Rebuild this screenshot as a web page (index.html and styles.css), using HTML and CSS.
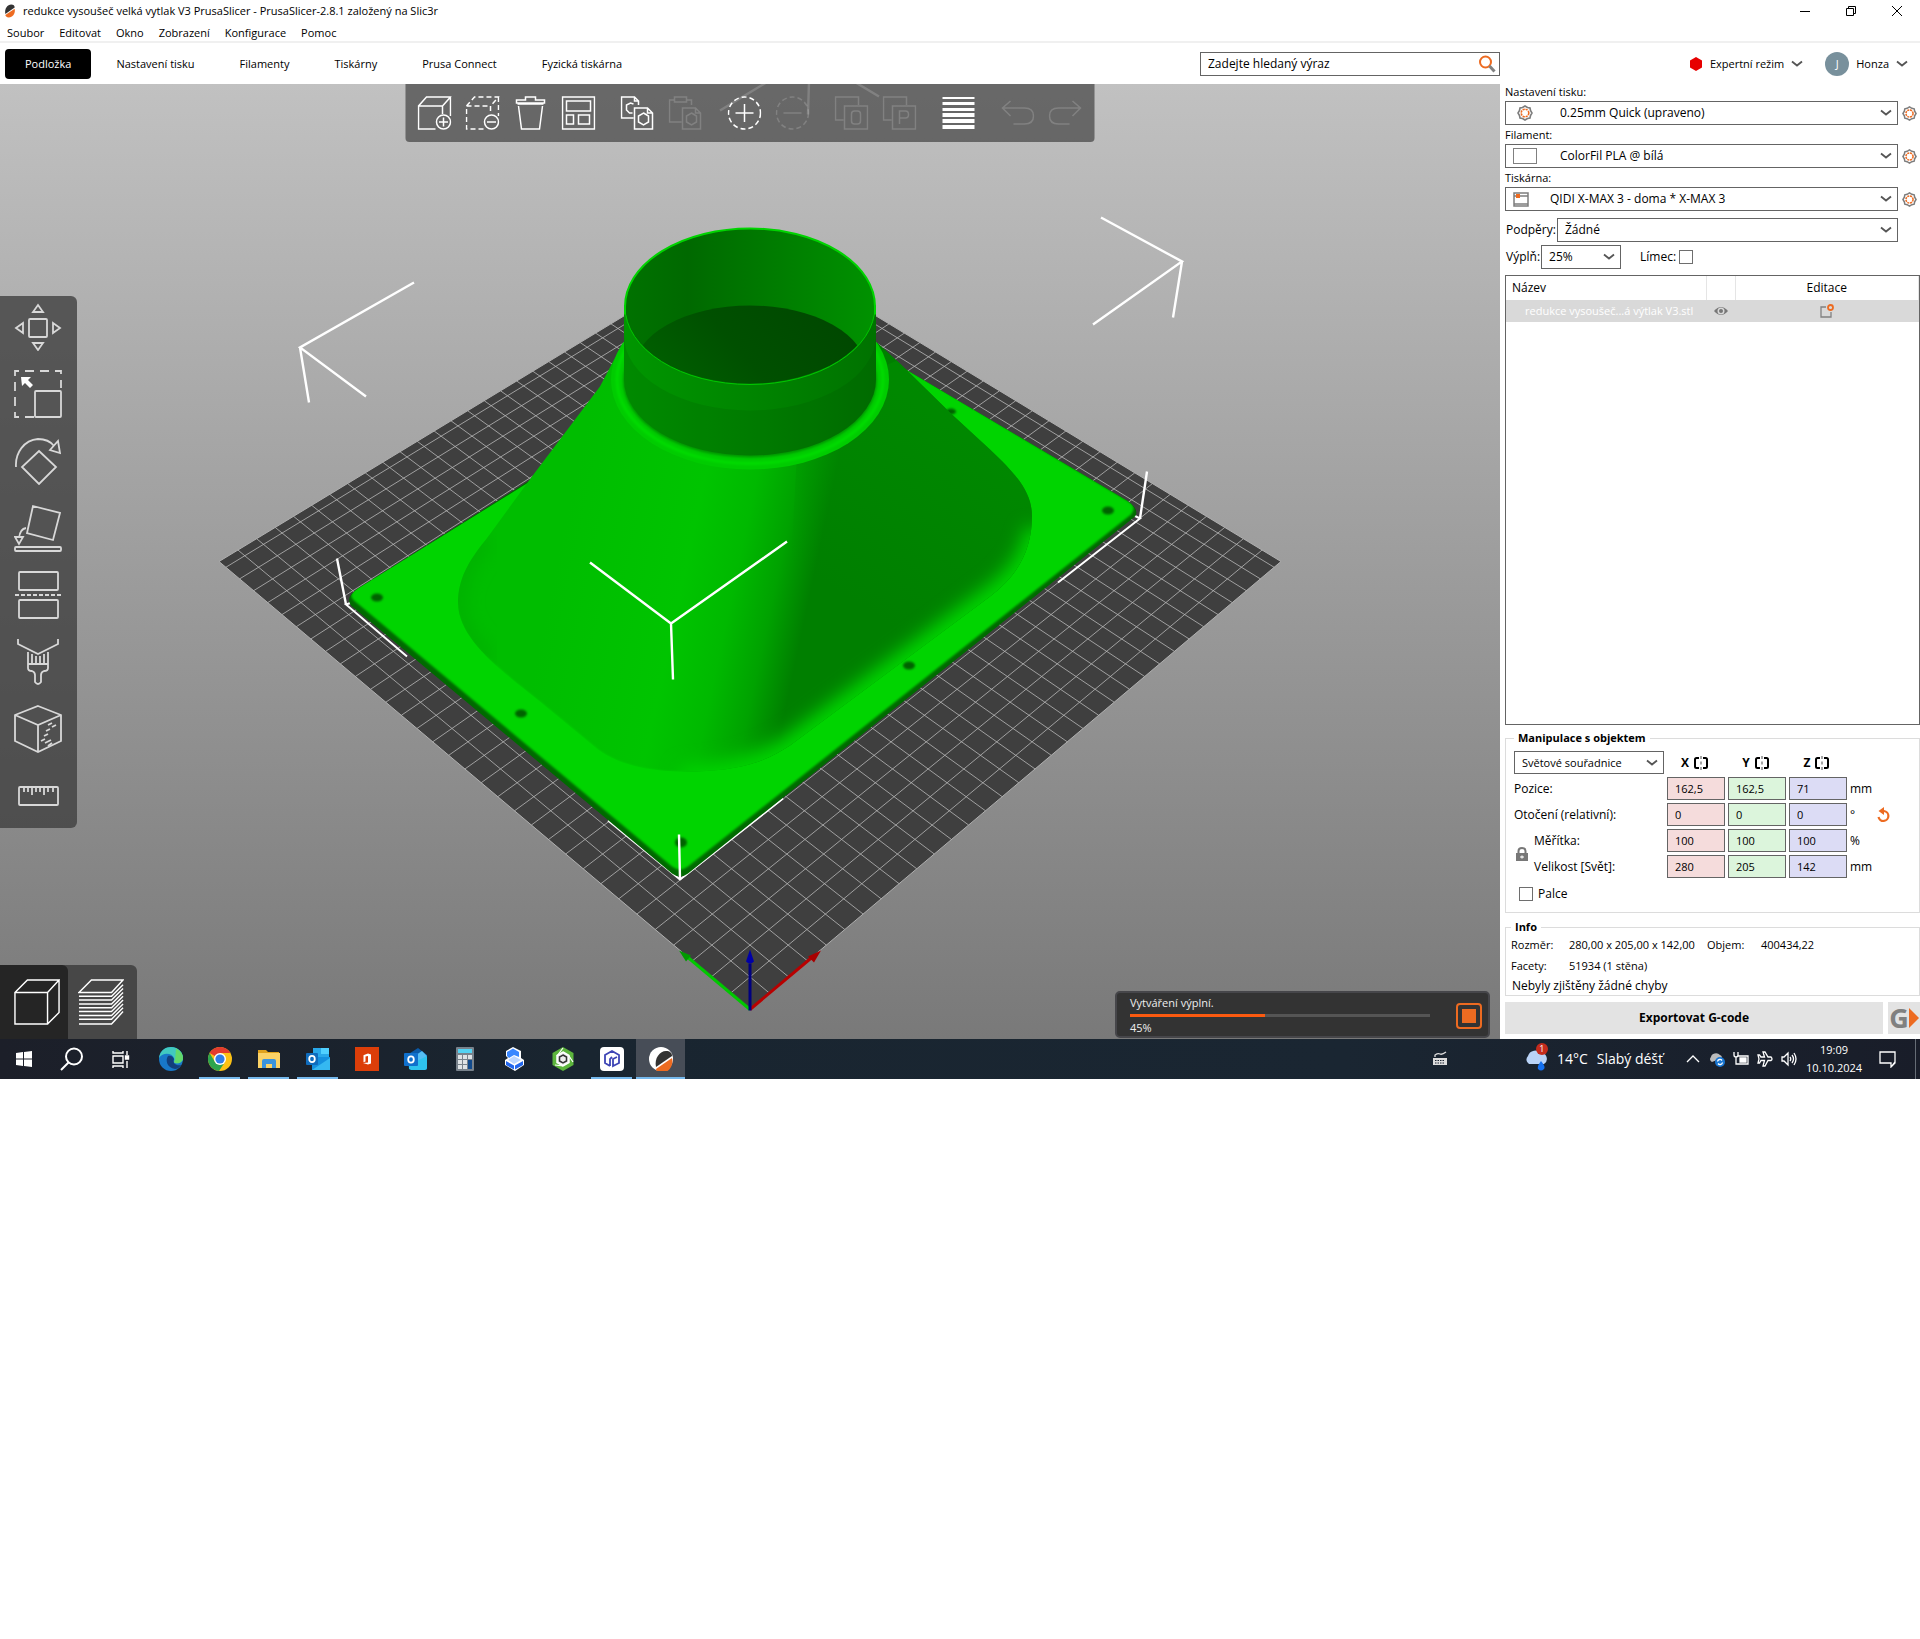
FILE: index.html
```html
<!DOCTYPE html>
<html lang="cs">
<head>
<meta charset="utf-8">
<title>redukce vysoušeč velká vytlak V3 PrusaSlicer</title>
<link rel="stylesheet" href="styles.css">
<script src="scene.js" defer></script>
</head>
<body>
<svg class="sprite" aria-hidden="true">
  <symbol id="chev" viewBox="0 0 12 8"><path d="M1 1.500L6 5.500L11 1.500" fill="none" stroke="#555" stroke-width="1.800"/></symbol>
  <symbol id="gear" viewBox="0 0 16 16"><g fill="none" stroke="#7d7d7d" stroke-width="1.600"><path d="M8 1L10.500 2.500L13 3L13.500 5.500L15 8L13.500 10.500L13 13L10.500 13.500L8 15L5.500 13.500L3 13L2.500 10.500L1 8L2.500 5.500L3 3L5.500 2.500Z"/></g><circle cx="8" cy="8" r="3.800" fill="none" stroke="#ed6b21" stroke-width="1.600" stroke-dasharray="2.200 .8"/></symbol>
  <symbol id="mirror" viewBox="0 0 14 14"><g fill="none" stroke="#000" stroke-width="2"><path d="M5 2H2.500Q1 2 1 3.500V10.500Q1 12 2.500 12H5M9 2H11.500Q13 2 13 3.500V10.500Q13 12 11.500 12H9"/></g><path d="M7 0V3M7 5.500V8.500M7 11V14" stroke="#888" stroke-width="1.500"/></symbol>
  <symbol id="prusa" viewBox="0 0 24 24"><path d="M4 17C2 8 8 1 14 1C18 1 20 3 20 6Z" fill="#333"/><path d="M20 8C22 16 16 23 10 23C6 23 4 21 4 19Z" fill="#ed6b21"/></symbol>
</svg>

<div class="window">
  <header>
    <div class="titlebar">
      <svg class="i14" viewBox="0 0 24 24"><use href="#prusa"/></svg>
      <h1>redukce vysoušeč velká vytlak V3 PrusaSlicer - PrusaSlicer-2.8.1 založený na Slic3r</h1>
      <div class="wincontrols">
        <button aria-label="Minimalizovat"><svg viewBox="0 0 10 10"><path d="M0 5.500H10"/></svg></button>
        <button aria-label="Obnovit"><svg viewBox="0 0 10 10"><path d="M.5 2.500H7.500V9.500H.5ZM2.500 2.500V.5H9.500V7.500H7.500"/></svg></button>
        <button aria-label="Zavřít"><svg viewBox="0 0 10 10"><path d="M0 0L10 10M10 0L0 10"/></svg></button>
      </div>
    </div>
    <nav class="menubar">
      <button>Soubor</button><button>Editovat</button><button>Okno</button><button>Zobrazení</button><button>Konfigurace</button><button>Pomoc</button>
    </nav>
    <div class="tabs">
      <button class="tab active">Podložka</button><button class="tab">Nastavení tisku</button><button class="tab">Filamenty</button><button class="tab">Tiskárny</button><button class="tab">Prusa Connect</button><button class="tab">Fyzická tiskárna</button>
      <div class="search">
        <input type="text" aria-label="Hledat" value="Zadejte hledaný výraz">
        <svg viewBox="0 0 18 18"><circle cx="7.500" cy="7" r="5.500" fill="none" stroke="#ed6b21" stroke-width="2"/><path d="M11.500 11L16.500 16.500" stroke="#808080" stroke-width="3"/></svg>
      </div>
      <div class="account">
        <button class="mode"><svg class="i14" viewBox="0 0 14 14"><path d="M7 0L13 3.500V10.500L7 14L1 10.500V3.500Z" fill="#e70000"/></svg>Expertní režim<svg class="chev" viewBox="0 0 12 8"><use href="#chev"/></svg></button>
        <button class="user"><span class="avatar">J</span>Honza<svg class="chev" viewBox="0 0 12 8"><use href="#chev"/></svg></button>
      </div>
    </div>
  </header>

  <main class="work">
    <section class="viewport" aria-label="3D náhled">
      <svg class="scene" viewBox="0 84 1500 956" preserveAspectRatio="xMidYMid slice">
        <defs>
          <linearGradient id="cone" gradientUnits="userSpaceOnUse" x1="560" y1="547" x2="809" y2="600"><stop offset="0" stop-color="#00bd00"/><stop offset=".5" stop-color="#00c400"/><stop offset=".7" stop-color="#00b900"/><stop offset=".86" stop-color="#00a200"/><stop offset="1" stop-color="#007f00"/></linearGradient>
          <linearGradient id="wall"><stop offset="0" stop-color="#007200"/><stop offset=".25" stop-color="#006900"/><stop offset=".6" stop-color="#007c00"/><stop offset="1" stop-color="#009200"/></linearGradient>
          <linearGradient id="tube"><stop offset="0" stop-color="#009600"/><stop offset=".5" stop-color="#008500"/><stop offset="1" stop-color="#007200"/></linearGradient>
          <linearGradient id="floor" x1="0" y1=".8" x2="1" y2=".3"><stop offset="0" stop-color="#006800"/><stop offset=".55" stop-color="#005000"/><stop offset="1" stop-color="#004800"/></linearGradient>
          <linearGradient id="darkside" gradientUnits="userSpaceOnUse" x1="850" y1="600" x2="960" y2="430"><stop offset="0" stop-color="#008c00" stop-opacity="0"/><stop offset="1" stop-color="#008c00" stop-opacity=".7"/></linearGradient>
          <filter id="b1" x="-10%" y="-10%" width="120%" height="120%"><feGaussianBlur stdDeviation="1.200"/></filter>
          <filter id="b2" x="-20%" y="-20%" width="140%" height="140%"><feGaussianBlur stdDeviation="9"/></filter>
          <clipPath id="mouth"><ellipse cx="750" cy="306" rx="125" ry="78"/></clipPath>
          <clipPath id="conec"><path id="coneshape" d="M623 343L600 387L532 477L486 540C468 562 458 580 458 604C459 640 500 670 540 702L598 750C620 766 650 772 686 772C730 772 760 766 790 746L990 597C1018 576 1032 550 1032 517C1032 495 1020 478 990 450L952 415L901 365L877 343Z"/></clipPath>
          <clipPath id="platec"><path d="M358 589L530 482L803 309L1127 501Q1140 510 1133 518L690 873Q681 881 672 873L352 605Q346 597 358 589Z"/></clipPath>
        </defs>
        <path d="M750 240L1281 562L750 1010L219 562Z" fill="#3f3f3f"/>
        <path id="grid" fill="none" stroke="#b8b8b8" stroke-opacity=".8"/>
        <path d="M750 240L1281 562L750 1010L219 562Z" fill="none" stroke="#b0b0b0"/>
        <path d="M407 657L346 605L352 603M608 821L680 880L783 799M1058 583L1140 519L1134 516" fill="none" stroke="#fff" stroke-width="2"/>
        <path d="M358 589L803 309L1127 501Q1140 510 1135 517L688 874Q680 880 672 874L351 606Q345 597 358 589Z" fill="#006a00"/>
        <g clip-path="url(#platec)"><path d="M358 587L803 307L1127 501Q1138 507 1131 515L688 867Q680 873 672 867L354 601Q347 595 358 587Z" fill="#00d400" filter="url(#b1)"/></g>
        <g fill="#006200" filter="url(#b1)"><ellipse cx="377" cy="598" rx="6" ry="4"/><ellipse cx="521" cy="714" rx="6" ry="4"/><ellipse cx="909" cy="666" rx="6" ry="4"/><ellipse cx="681" cy="843" rx="6" ry="5"/><ellipse cx="1108" cy="511" rx="6" ry="4"/><ellipse cx="951" cy="412" rx="5" ry="3"/></g>
        <use href="#coneshape" fill="url(#cone)"/>
        <g clip-path="url(#conec)">
          <path d="M800 400L1050 300V700L780 760Z" fill="url(#darkside)"/>
          <path d="M1042 530C1038 560 1022 580 1000 598L796 750C760 774 720 782 680 784" fill="none" stroke="#00d400" stroke-width="34" filter="url(#b2)"/>
          <path d="M456 604C457 642 500 672 540 704L598 752C620 768 650 774 686 774" fill="none" stroke="#00d800" stroke-width="3" filter="url(#b1)"/>
          <path d="M486 540C468 562 458 580 458 604C458 625 470 642 490 660" fill="none" stroke="#00ad00" stroke-width="12" filter="url(#b2)"/>
        </g>
        <ellipse cx="750" cy="380" rx="139" ry="90" fill="#00cc00"/>
        <ellipse cx="750" cy="380" rx="133" ry="84" fill="none" stroke="#00dc00" stroke-width="3" filter="url(#b1)"/>
        <ellipse cx="750" cy="381" rx="127" ry="77" fill="#009800" filter="url(#b1)"/>
        <path d="M624 306V380A126 76 0 0 0 876 380V306Z" fill="url(#tube)"/>
        <path d="M624 336A126 75 0 0 0 876 336V380A126 76 0 0 1 624 380Z" fill="#004000" fill-opacity=".13"/>
        <ellipse cx="750" cy="307" rx="125" ry="78" fill="url(#wall)"/>
        <ellipse cx="750" cy="372" rx="117" ry="66" fill="url(#floor)" clip-path="url(#mouth)"/>
        <path d="M625 307A125 78 0 0 0 875 307" fill="none" stroke="#00c800"/>
        <path d="M625 315V307A125 78 0 0 1 875 307V315" fill="none" stroke="#00d400" stroke-width="2"/>
        <g fill="none" stroke="#fff" stroke-width="2.400">
          <path d="M414 283L300 348L366 397M300 348L309 403"/><path d="M1101 218L1182 262L1093 325M1182 262L1173 318"/>
          <path d="M337 559L346 605M1147 472L1140 519M679 835L680 880"/><path d="M590 563L671 624L787 542M671 624L673 680"/>
          <path d="M720 111L768 82M809 82L808 115M854 82L879 97"/>
        </g>
        <g fill="none" stroke-width="3"><path d="M750 1010L688 958" stroke="#00c800"/><path d="M750 1010L813 957" stroke="#b80000"/><path d="M750 1011V964" stroke="#000080"/></g>
        <path d="M679 951L691 956L686 962Z" fill="#009a00"/><path d="M821 951L814 963L808 957Z" fill="#a80000"/><path d="M750 950L754 962Q750 966 746 962Z" fill="#0000a8"/>
      </svg>

      <div class="toolbar" role="toolbar" aria-label="Hlavní nástroje">
        <div class="group">
          <button aria-label="Přidat"><svg viewBox="0 0 34 34"><path d="M18 33H1V10H25V18M1 10L9 1H33L25 10M33 1V20"/><circle cx="26" cy="26" r="7"/><path d="M26 21.500V30.500M21.500 26H30.500"/></svg></button>
          <button aria-label="Smazat"><svg viewBox="0 0 34 34"><path stroke-dasharray="5 3" d="M18 33H1V10H25V18M1 10L9 1H33L25 10M33 1V20"/><circle cx="26" cy="26" r="7"/><path d="M21.500 26H30.500"/></svg></button>
          <button aria-label="Smazat vše"><svg viewBox="0 0 34 34"><path d="M3 4H12V1H22V4H31V7H3ZM5 10L8 33H26L29 10M4 8H30"/></svg></button>
          <button aria-label="Uspořádat"><svg viewBox="0 0 34 34"><path d="M1 1H33V33H1ZM5 5H29V15H5ZM5 19H12V28H5ZM17 19H28V28H17Z"/></svg></button>
        </div>
        <div class="group">
          <button aria-label="Kopírovat"><svg viewBox="0 0 34 34"><path d="M13 22H1V1H14L18 5V9M14 1V5H18M14 12H27L32 17V33H14ZM27 12V17H32M23 17L28 20V26L23 29L18 26V20ZM12 17L9 17L6 14V9L10 7L13 8"/></svg></button>
          <button disabled aria-label="Vložit"><svg viewBox="0 0 34 34"><path d="M13 26H1V4H6V1H18V6H6V4M18 4H23V9M14 12H27L32 17V33H14ZM27 12V17H32M23 17L28 20V26L23 29L18 26V20Z"/></svg></button>
        </div>
        <div class="group">
          <button aria-label="Přidat instanci"><svg viewBox="0 0 34 34"><circle cx="17" cy="17" r="16" stroke-dasharray="5 3"/><path d="M17 8V26M8 17H26"/></svg></button>
          <button disabled aria-label="Odebrat instanci"><svg viewBox="0 0 34 34"><circle cx="17" cy="17" r="16" stroke-dasharray="5 3"/><path d="M8 17H26"/></svg></button>
        </div>
        <div class="group">
          <button disabled aria-label="Rozdělit na objekty"><svg viewBox="0 0 34 34"><path d="M9 24H1V1H24V9M10 10H33V33H10Z"/><rect x="17" y="15" width="9" height="13" rx="3"/></svg></button>
          <button disabled aria-label="Rozdělit na části"><svg viewBox="0 0 34 34"><path d="M9 24H1V1H24V9M10 10H33V33H10ZM17 28V15H23Q26 15 26 18.500Q26 22 23 22H17"/></svg></button>
        </div>
        <div class="group">
          <button aria-label="Výška vrstev"><svg viewBox="0 0 34 34"><g fill="#fff" stroke="none"><path d="M1 1H33V3H1ZM1 6H33V9H1ZM1 12H33V15H1ZM1 17H33V21H1ZM1 23H33V27H1ZM1 29H33V33H1Z"/></g></svg></button>
        </div>
        <div class="group">
          <button disabled aria-label="Zpět"><svg viewBox="0 0 34 34"><path d="M10 5L2 12L10 20M2 12H24Q33 12 33 20Q33 28 24 28H13"/></svg></button>
          <button disabled aria-label="Znovu"><svg viewBox="0 0 34 34"><path d="M24 5L32 12L24 20M32 12H10Q1 12 1 20Q1 28 10 28H21"/></svg></button>
        </div>
      </div>

      <div class="gizmos" role="toolbar" aria-label="Manipulace">
        <button aria-label="Přesunout"><svg viewBox="0 0 48 48"><rect x="15" y="16" width="18" height="18" rx="1"/><path d="M24 2L29 9H19ZM24 47L29 40H19ZM2 25L9 20V30ZM46 25L39 20V30Z"/></svg></button>
        <button aria-label="Měřítko"><svg viewBox="0 0 48 48"><path stroke-dasharray="9 6" d="M20 47H1V1H47V18"/><rect x="21" y="21" width="26" height="26" rx="1"/><path fill="#fff" stroke="none" d="M7 7H17L14 10L19 15L16 18L11 13L8 16Z"/></svg></button>
        <button aria-label="Otočit"><svg viewBox="0 0 48 48"><path d="M25 14L42 30L25 47L8 30ZM2 30C1 16 10 3 24 2C32 2 37 5 40 9M36 13L44 4L46 16Z"/></svg></button>
        <button aria-label="Umístit plochou"><svg viewBox="0 0 48 48"><path d="M19 2L46 9L39 36L13 29ZM12 24Q6 25 5 34M1 33H9L5 40Z"/><rect x="1" y="43" width="46" height="4" rx="1"/></svg></button>
        <button aria-label="Řez"><svg viewBox="0 0 48 48"><rect x="5" y="1" width="39" height="18" rx="1"/><rect x="5" y="29" width="39" height="18" rx="1"/><path stroke-dasharray="4 2" d="M1 24H47"/></svg></button>
        <button aria-label="Malování podpěr"><svg viewBox="0 0 48 48"><path d="M4 1V6L24 16L44 6V1M14 14V30Q14 33 18 33Q21 34 21 37V44Q24 48 27 44V37Q27 34 30 33Q34 33 34 30V14M14 26H34M18 16V26M22 18V26M26 18V26M30 16V26"/></svg></button>
        <button aria-label="Malování švu"><svg viewBox="0 0 48 48"><path d="M24 1L47 10V36L24 47L1 36V10ZM1 10L24 20L47 10M24 20V47"/><path d="M34 20L38 18M38 22L42 20M32 26L36 24M30 31L34 29M27 36L31 34M31 38L37 35M34 41L38 38"/></svg></button>
        <button aria-label="Měření"><svg viewBox="0 0 48 48"><rect x="5" y="15" width="39" height="18" rx="1"/><path d="M10 15V20M14 15V20M18 15V23M22 15V20M26 15V20M30 15V23M34 15V20M39 15V20"/></svg></button>
      </div>

      <div class="views">
        <button class="on" aria-label="3D editor"><svg viewBox="0 0 48 48"><path d="M1 14L14 1H47L35 14V47H1ZM1 14H35M47 1V35L35 47"/></svg></button>
        <button aria-label="Náhled"><svg viewBox="0 0 48 48"><path d="M1 14L14 1H47L35 14ZM1 18H35L47 6M1 22H35L47 10M1 26H35L47 14M1 30H35L47 18M1 34H35L47 22M1 38H35L47 26M1 42H35L47 30M1 47H35L47 34"/></svg></button>
      </div>

      <div class="toast" role="status">
        <div class="job"><span id="job">Vytváření výplní.</span><progress aria-labelledby="job" max="100" value="45">45%</progress><span>45%</span></div>
        <button class="stop" aria-label="Zastavit"></button>
      </div>
    </section>

    <aside class="sidebar">
      <div class="preset">
        <label for="print">Nastavení tisku:</label>
        <div class="combo"><svg class="lead" viewBox="0 0 16 16"><use href="#gear"/></svg><select id="print" class="wide"><option>0.25mm Quick (upraveno)</option></select><svg class="chev" viewBox="0 0 12 8"><use href="#chev"/></svg></div>
        <button class="cog" aria-label="Upravit nastavení tisku"><svg viewBox="0 0 16 16"><use href="#gear"/></svg></button>
        <label for="fil">Filament:</label>
        <div class="combo"><span class="lead swatch"></span><select id="fil" class="wide"><option>ColorFil PLA @ bílá</option></select><svg class="chev" viewBox="0 0 12 8"><use href="#chev"/></svg></div>
        <button class="cog" aria-label="Upravit filament"><svg viewBox="0 0 16 16"><use href="#gear"/></svg></button>
        <label for="prn">Tiskárna:</label>
        <div class="combo"><svg class="lead printer" viewBox="0 0 16 16"><path d="M1 2H15V15H1ZM1 5H15M1 13H15" fill="none" stroke="#7d7d7d" stroke-width="1.500"/><path d="M3 3H7V7H3Z" fill="#ed6b21"/></svg><select id="prn" class="mid"><option>QIDI X-MAX 3 - doma * X-MAX 3</option></select><svg class="chev" viewBox="0 0 12 8"><use href="#chev"/></svg></div>
        <button class="cog" aria-label="Upravit tiskárnu"><svg viewBox="0 0 16 16"><use href="#gear"/></svg></button>
      </div>
      <div class="quick supports"><label for="sup">Podpěry:</label><div class="combo grow"><select id="sup"><option>Žádné</option></select><svg class="chev" viewBox="0 0 12 8"><use href="#chev"/></svg></div></div>
      <div class="quick"><label for="inf">Výplň:</label><div class="combo infill"><select id="inf"><option>25%</option></select><svg class="chev" viewBox="0 0 12 8"><use href="#chev"/></svg></div><label class="brim">Límec:<input type="checkbox"></label></div>

      <div class="objects">
        <table>
          <thead><tr><th class="name">Název</th><th class="eye"></th><th>Editace</th></tr></thead>
          <tbody><tr><td class="name">redukce vysoušeč...á výtlak V3.stl</td><td class="eye"><svg class="i14" viewBox="0 0 14 14"><path d="M0 7Q7 -1 14 7Q7 15 0 7Z" fill="#777"/><circle cx="7" cy="7" r="3.500" fill="#d9d9d9"/><circle cx="7" cy="7" r="2" fill="#777"/></svg></td><td><svg class="i14" viewBox="0 0 14 14"><path d="M6 3H1V13H11V8" fill="none" stroke="#808080" stroke-width="1.300"/><circle cx="10.500" cy="3.500" r="2.500" fill="none" stroke="#ed6b21" stroke-width="1.800"/></svg></td></tr></tbody>
        </table>
      </div>

      <fieldset class="manip">
        <legend>Manipulace s objektem</legend>
        <div class="coords">
          <div class="combo"><select aria-label="Souřadnice"><option>Světové souřadnice</option></select><svg class="chev" viewBox="0 0 12 8"><use href="#chev"/></svg></div>
          <b class="axis">X <svg class="i14" viewBox="0 0 14 14"><use href="#mirror"/></svg></b><b class="axis">Y <svg class="i14" viewBox="0 0 14 14"><use href="#mirror"/></svg></b><b class="axis">Z <svg class="i14" viewBox="0 0 14 14"><use href="#mirror"/></svg></b><span></span>
          <span>Pozice:</span><input class="x" aria-label="Pozice X" value="162,5"><input class="y" aria-label="Pozice Y" value="162,5"><input class="z" aria-label="Pozice Z" value="71"><span class="unit">mm</span>
          <span>Otočení (relativní):</span><input class="x" aria-label="Otočení X" value="0"><input class="y" aria-label="Otočení Y" value="0"><input class="z" aria-label="Otočení Z" value="0"><span class="unit">°<button class="reset" aria-label="Obnovit otočení"><svg viewBox="0 0 14 16"><path d="M3 4H7A5 5 0 1 1 1.500 10" fill="none" stroke="#ed6b21" stroke-width="2.200"/><path d="M7 0V8L1.500 4Z" fill="#ed6b21"/></svg></button></span>
          <div class="scale"><button class="lock" aria-label="Zamknout poměr"><svg viewBox="0 0 12 14"><path d="M0 6H12V14H0Z" fill="#777"/><path d="M2.500 6V4Q2.500 1 6 1Q9.500 1 9.500 4V6" fill="none" stroke="#777" stroke-width="2"/><path d="M4 10H8M6 8.500V11.500" stroke="#fff" stroke-width="1.200"/></svg></button><span>Měřítka:</span><span>Velikost [Svět]:</span></div>
          <input class="x" aria-label="Měřítko X" value="100"><input class="y" aria-label="Měřítko Y" value="100"><input class="z" aria-label="Měřítko Z" value="100"><span class="unit">%</span>
          <input class="x" aria-label="Velikost X" value="280"><input class="y" aria-label="Velikost Y" value="205"><input class="z" aria-label="Velikost Z" value="142"><span class="unit">mm</span>
        </div>
        <label class="inches"><input type="checkbox">Palce</label>
      </fieldset>

      <fieldset class="info">
        <legend>Info</legend>
        <dl><dt>Rozměr:</dt><dd>280,00 x 205,00 x 142,00</dd><dt>Objem:</dt><dd>400434,22</dd><dt>Facety:</dt><dd>51934 (1 stěna)</dd></dl>
        <p>Nebyly zjištěny žádné chyby</p>
      </fieldset>

      <div class="export"><button class="main">Exportovat G-code</button><button class="gbtn" aria-label="Odeslat G-code"><span>G</span><svg viewBox="0 0 10 20"><path d="M0 0L10 10L0 20Z" fill="#ed6b21"/></svg></button></div>
    </aside>
  </main>
</div>

<footer class="taskbar">
  <div class="start">
    <button aria-label="Start"><svg viewBox="0 0 24 24" fill="#fff"><path d="M4 6L11 5V11.500H4ZM12 5L20 4V11.500H12ZM4 12.500H11V19L4 18ZM12 12.500H20V20L12 19Z"/></svg></button>
    <button aria-label="Hledat"><svg viewBox="0 0 24 24" fill="none" stroke="#fff" stroke-width="2"><circle cx="14" cy="9.500" r="8"/><path d="M8.500 15.500L1 23"/></svg></button>
    <button aria-label="Zobrazení úkolů"><svg viewBox="0 0 24 24" fill="none" stroke="#fff" stroke-width="1.400"><path d="M5 9H15V16H5ZM5 4V6H15V4M5 21V19H15V21M19 4V8M19 14V21"/><path d="M17.500 9H20.500V12H17.500Z" fill="#fff"/></svg></button>
  </div>
  <div class="apps">
    <button aria-label="Edge"><svg viewBox="0 0 24 24"><circle cx="12" cy="12" r="12" fill="#1878c8"/><path d="M0 11C1 3 7 0 12 0C20 0 24 6 24 11C24 15 20 17 16 16C14 15 16 14 15 11C13 6 4 5 0 11Z" fill="#41c9c0"/><path d="M17 1.500C22 4 24 8 24 11C24 15 20 17 16 16Q14 15 16 13Z" fill="#62d96b"/><path d="M9 9C6 13 8 21 16 22C20 22 22 18 22 18C18 19 13 17 15 12C14 9 11 8 9 9Z" fill="#123f7c"/></svg></button>
    <button class="run" aria-label="Chrome"><svg viewBox="0 0 24 24"><circle cx="12" cy="12" r="12" fill="#fbc116"/><path d="M12 12L1.600 6A12 12 0 0 1 22.400 6H12Z" fill="#e33b2e"/><path d="M1.600 6A12 12 0 0 0 11 24L17 15L12 17L7 15Z" fill="#2da44e"/><circle cx="12" cy="12" r="6" fill="#fff"/><circle cx="12" cy="12" r="4.600" fill="#2f7de9"/></svg></button>
    <button class="run" aria-label="Průzkumník"><svg viewBox="0 0 24 24"><path d="M1 3H9L11 5H22V9H1Z" fill="#e0a21c"/><path d="M1 6H23V21H1Z" fill="#fbd266"/><path d="M5 21V14Q5 12 7 12H17Q19 12 19 14V21H15V17H9V21Z" fill="#3b93dc"/></svg></button>
    <button class="run" aria-label="Outlook"><svg viewBox="0 0 24 24"><path d="M7 1H23V14H7Z" fill="#28a8ea"/><path d="M15 1H23V7H15Z" fill="#50d0ff"/><path d="M6 10H24V23H6Z" fill="#1490df"/><path d="M6 23L24 11V23Z" fill="#35b8f1"/><rect y="6" width="12" height="12" rx="1" fill="#0f6cbd"/><ellipse cx="6" cy="12" rx="2.800" ry="3.200" fill="none" stroke="#fff" stroke-width="1.800"/></svg></button>
    <button aria-label="Office"><svg viewBox="0 0 24 24"><path d="M0 0H24V24H0Z" fill="#dc3e09"/><path d="M9 8L13 6.500L16 7.500V16.500L13 17.500L8 16L13 15.500V9L10.500 9.500V14.500L8.500 15.200V8.200Z" fill="#fff"/></svg></button>
    <button aria-label="Outlook nový"><svg viewBox="0 0 24 24"><path d="M3 8L14 1L23 8V22H5Z" fill="#0a5aa8"/><path d="M6 12L18 4L23 9L12 19Z" fill="#55bdf2"/><path d="M5 22V18L23 9V21Q23 23 21 23H7Z" fill="#2ec3ee"/><rect y="6" width="14" height="13" rx="1" fill="#1070cc"/><ellipse cx="7" cy="12.500" rx="2.800" ry="3.200" fill="none" stroke="#fff" stroke-width="1.800"/></svg></button>
    <button aria-label="Kalkulačka"><svg viewBox="0 0 24 24"><rect x="3" width="18" height="24" rx="1" fill="#78828c"/><path d="M5 2H19V6H5Z" fill="#54d3f3"/><path d="M5 8H9V12H5ZM10 8H14V12H10ZM5 13H9V17H5ZM10 13H14V17H10ZM5 18H9V22H5ZM10 18H14V22H10ZM15 8H19V12H15Z" fill="#dfe3e6"/><path d="M15 13H19V22H15Z" fill="#124a8c"/></svg></button>
    <button aria-label="3D tisk"><svg viewBox="0 0 24 24"><path d="M11 0L19 4V11L22 13V18L13 24L3 18V13L6 11L4 9V4Z" fill="#fff"/><path d="M11 1.500L17 5V10L12 8L7 11L5 9V5Z" fill="#3987ff"/><path d="M12 9L19 13L12 17L6 13Z" fill="#bcd6ff"/><path d="M4 14L12 18.500V22.500L4 18ZM13 18.500L21 14V18L13 22.500Z" fill="#2166ee"/></svg></button>
    <button aria-label="Slicer"><svg viewBox="0 0 24 24"><path d="M12 0L22.500 6V18L12 24L1.500 18V6Z" fill="#5cb53c"/><path d="M12 5L18 8.500V15.500L12 19L6 15.500V8.500Z" fill="#eee" stroke="#fff" stroke-width="1.500"/><path d="M12 8L15.500 10V14L12 16L8.500 14V10Z" fill="none" stroke="#333" stroke-width="1.500"/><path d="M6 9L12 1M18 9L22 15M12 19L4 18" stroke="#fff" stroke-width="1.200"/></svg></button>
    <button class="run" aria-label="QIDI Slicer"><svg viewBox="0 0 24 24"><rect x="0" width="24" height="24" rx="4" fill="#fff"/><path d="M10 19L5 16V8L12 4L19 8V16L13 19V12L17 10M10 19V12L12 10" fill="none" stroke="#3d44b5" stroke-width="1.800"/></svg></button>
    <button class="run current" aria-label="PrusaSlicer"><svg viewBox="0 0 24 24"><circle cx="12" cy="12" r="12" fill="#fff"/><svg x="3" y="3" width="18" height="18" viewBox="0 0 24 24"><use href="#prusa"/></svg></svg></button>
  </div>
  <div class="tray">
    <svg class="kbd" viewBox="0 0 16 16"><path d="M1 7H15V14H1Z" fill="#ddd"/><path d="M3 6V4Q6 2 8 3T14 1" fill="none" stroke="#ddd" stroke-width="1.300"/><path d="M3 9.500H13M3 12H13" stroke="#1a2330" stroke-dasharray="1.500 1"/></svg>
    <button class="weather"><span class="cloud"><svg viewBox="0 0 24 24"><path d="M5 17A5 5 0 0 1 4 9A8 7 0 0 1 18 6A6 6 0 0 1 20 17Z" fill="#b9d3f7"/><path d="M17 14Q22 20 20 22Q17 25 14 22Q13 19 17 14Z" fill="#1470f0"/></svg><i>1</i></span><span>14°C</span><span>Slabý déšť</span></button>
    <div class="status">
      <svg viewBox="0 0 16 16"><path d="M2 11L8 5L14 11"/></svg>
      <svg viewBox="0 0 16 16"><path d="M3 11A3 3 0 0 1 2 6A5 4 0 0 1 11 4A3 3 0 0 1 13 7Z" fill="#bbb" stroke="none"/><circle cx="11" cy="11" r="5" fill="#1976d2" stroke="none"/><path d="M8.500 10.500A2.500 2.500 0 0 1 13 9.500M13.500 11.500A2.500 2.500 0 0 1 9 12.500"/></svg>
      <svg viewBox="0 0 16 16"><path d="M5 5H15V13H3V10M1 1V4Q1 6 3 6T5 4V1M3 6V10"/><path d="M7 7H13V11H7Z" fill="#fff"/></svg>
      <svg viewBox="0 0 16 16"><path d="M6 1H8L11 6H14Q16 8 14 9.500H11L8 15H6L7.500 9.500H4L2.500 12H1L2 8L1 4H2.500L4 6H7.500Z"/></svg>
      <svg viewBox="0 0 16 16"><path d="M1 6H3L7 2V14L3 10H1ZM9 6Q10.500 8 9 10M11 4Q14 8 11 12M13 2Q17 8 13 14"/></svg>
    </div>
    <time class="clock">19:09<br>10.10.2024</time>
    <svg class="note" viewBox="0 0 18 18"><path d="M1 2H16V13L12 17V13H1ZM13 16L16 12" fill="none" stroke="#fff" stroke-width="1.300"/></svg>
    <span class="peek"></span>
  </div>
</footer>
</body>
</html>
```
FILE: styles.css
```css
* { box-sizing: border-box; }
body { margin: 0; background: #fff; color: #000; font: 12px/16px "Open Sans", "Noto Sans", sans-serif; }
button, input, select { font: inherit; color: inherit; margin: 0; }
button { display: flex; align-items: center; justify-content: center; padding: 0; border: 0; background: none; }
svg { display: block; }
.sprite { display: none; }
.i14 { width: 14px; height: 14px; flex: none; }
.chev { width: 12px; height: 8px; flex: none; }

header { font-size: 11px; }
.titlebar { display: flex; align-items: center; height: 22px; padding-left: 3px; gap: 6px; }
.titlebar h1 { margin: 0; font-size: 11px; font-weight: 400; flex: 1; white-space: nowrap; }
.wincontrols { display: flex; }
.wincontrols button { width: 46px; height: 22px; }
.wincontrols svg { width: 10px; height: 10px; fill: none; stroke: #000; }
.menubar { display: flex; gap: 15px; height: 21px; padding: 3px 7px 0; border-bottom: 2px solid #f0f0f0; }
.tabs { display: flex; align-items: center; height: 41px; padding-left: 5px; gap: 5px; }
.tab { height: 30px; padding: 0 20px; border-radius: 4px; white-space: nowrap; }
.tab.active { background: #000; color: #fff; }
.search { display: flex; align-items: center; width: 300px; height: 24px; margin-left: auto; padding-right: 3px; border: 1px solid #646464; font-size: 12px; }
.search input { flex: 1; min-width: 0; border: 0; padding: 0 7px; background: none; }
.search svg { width: 18px; height: 18px; }
.account { display: flex; justify-content: flex-end; gap: 22px; width: 415px; padding-right: 12px; }
.account button { gap: 7px; }
.avatar { width: 24px; height: 24px; line-height: 24px; border-radius: 50%; background: #78909c; color: #fff; }

.work { display: grid; grid-template-columns: minmax(0, 1fr) 420px; }
.viewport { position: relative; overflow: hidden; background: linear-gradient(#c1c1c1, #797979); }
.scene { position: absolute; inset: 0; width: 100%; height: 100%; }
.toolbar { position: absolute; top: 0; left: 50%; transform: translateX(-50%); display: flex; gap: 25px; padding: 12px; height: 58px; border-radius: 0 0 4px 4px; background: rgba(45, 45, 45, .6); }
.group { display: flex; gap: 14px; }
.toolbar svg { width: 34px; height: 34px; fill: none; stroke: #fff; stroke-width: 1.500px; }
.toolbar button:disabled { opacity: .17; }
.gizmos { position: absolute; left: 0; top: 212px; display: grid; gap: 19px; padding: 7px 15px 8px 14px; border-radius: 0 6px 6px 0; background: rgba(64, 64, 64, .8); }
.gizmos svg { width: 48px; height: 48px; fill: none; stroke: #d8d8d8; stroke-width: 1.800px; }
.views { position: absolute; left: 0; bottom: 0; display: flex; border-radius: 0 6px 0 0; overflow: hidden; background: #474747; }
.views button { height: 74px; padding: 0 13px 0 10px; }
.views svg { width: 46px; height: 48px; fill: none; stroke: #fff; stroke-width: 1.500px; }
.views .on { padding: 0 8px 0 14px; background: #252525; border-radius: 0 6px 0 0; }
.toast { position: absolute; right: 10px; bottom: 1px; width: 375px; display: flex; align-items: center; justify-content: space-between; padding: 2px 6px 0 13px; border: 2px solid #46464a; border-radius: 5px; background: #333; color: #eee; font-size: 11px; line-height: 16px; }
.job { display: grid; width: 300px; gap: 3px; }
.job progress { appearance: none; width: 100%; height: 3px; border: 0; background: #555; }
.job progress::-webkit-progress-bar { background: #555; }
.job progress::-webkit-progress-value { background: #fb5a10; }
.stop { width: 26px; height: 26px; border: 2px solid #ed6b21; border-radius: 4px; background: #ed6b21 content-box; padding: 4px; }

.sidebar { display: flex; flex-direction: column; padding: 0 0 5px 5px; }
.preset { display: grid; grid-template-columns: 1fr 22px; }
.preset label { grid-column: 1 / -1; height: 19px; line-height: 16px; padding-top: 2px; font-size: 11px; }
.preset label:first-child { height: 17px; padding-top: 0; }
.combo { display: grid; grid-template-columns: 38px 1fr 22px; align-items: center; height: 24px; background: #fff; border: 1px solid #646464; }
.combo select { grid-area: 1 / 1 / 2 / -1; appearance: none; width: 100%; height: 22px; border: 0; padding: 0 24px 0 7px; background: none; }
.combo select.wide { padding-left: 54px; }
.combo select.mid { padding-left: 44px; }
.combo .chev { grid-area: 1 / 3; justify-self: center; }
.lead { grid-area: 1 / 1; justify-self: center; width: 16px; height: 16px; }
.printer { justify-self: start; margin-left: 7px; }
.swatch { width: 24px; border: 1px solid #808080; }
.cog { height: 24px; }
.cog svg { width: 15px; height: 15px; }
.quick { display: flex; align-items: center; gap: 1px; padding: 0 22px 0 1px; margin-top: 3px; }
.supports { margin-top: 7px; }
.grow { flex: 1; }
.infill { width: 80px; }
input[type=checkbox] { appearance: none; width: 14px; height: 14px; border: 1px solid #6e6e6e; background: #fff; }
.brim { display: flex; align-items: center; gap: 3px; margin-left: 18px; }
.objects { flex: 1 0 450px; margin-top: 6px; border: 1px solid #646464; }
.objects table { width: 100%; border-collapse: collapse; table-layout: fixed; }
.objects th { height: 24px; font-weight: 400; padding: 0; border-right: 1px solid #e5e5e5; }
.objects td { height: 22px; padding: 0; background: #d9d9d9; color: #fff; font-size: 11px; }
.objects td svg { margin: auto; }
.objects .name { width: 200px; text-align: left; white-space: nowrap; }
.objects th.name { padding-left: 6px; }
.objects td.name { padding-left: 19px; }
.objects .eye { width: 29px; }
fieldset { min-width: 0; margin: 5px 0 0; border: 1px solid #dcdcdc; }
legend { font-size: 11px; font-weight: 700; padding: 0 4px; }
.manip { padding: 5px 0 10px 8px; }
.info { padding: 2px 0 1px 5px; margin-top: 6px; }
.coords { display: grid; grid-template-columns: 150px repeat(3, 58px) 1fr; gap: 3px; align-items: center; }
.coords input { width: 58px; height: 23px; padding: 0 7px; border: 1px solid #646464; font-size: 11px; }
.x { background: #f5dcdc; }
.y { background: #dcf5dc; }
.z { background: #dcdcf5; }
.axis { display: flex; align-items: center; justify-content: center; gap: 5px; padding-right: 3px; }
.coords .combo { height: 23px; font-size: 11px; }
.coords .combo select { height: 21px; }
.unit { display: flex; align-items: center; gap: 22px; }
.reset svg { width: 14px; height: 16px; }
.scale { grid-row: span 2; display: grid; grid-template-columns: 20px 1fr; row-gap: 10px; align-items: center; }
.lock { grid-row: span 2; justify-content: flex-start; padding-left: 2px; }
.lock svg { width: 12px; height: 14px; }
.inches { display: flex; align-items: center; gap: 5px; margin: 8px 0 0 5px; }
.info dl { display: grid; grid-template-columns: 58px 138px 54px 1fr; row-gap: 5px; margin: 0; font-size: 11px; }
.info dd { margin: 0; white-space: nowrap; }
.info p { margin: 4px 0 0 1px; }
.export { display: flex; gap: 5px; margin-top: 6px; height: 32px; font-weight: 700; }
.export button { background: #e3e3e3; }
.main { flex: 1; }
.gbtn { width: 32px; }
.gbtn span { font: 700 27px/32px "Open Sans", sans-serif; color: #808080; }
.gbtn svg { width: 10px; height: 20px; }

.taskbar { display: flex; height: 40px; background: linear-gradient(90deg, #1c1f29, #192530 30%, #1a2632 70%, #191d29); color: #fff; }
.taskbar svg { width: 24px; height: 24px; }
.start, .apps { display: flex; }
.start button { width: 48px; }
.apps { margin-left: 2px; }
.apps button { width: 49px; border-top: 2px solid transparent; border-bottom: 2px solid transparent; }
.apps .run { width: 41px; margin: 0 4px; border-bottom-color: #76b9ed; }
.apps .current { width: 49px; margin: 0; background: #474d57; }
.tray { display: flex; align-items: center; margin-left: auto; }
.tray .kbd { width: 16px; height: 16px; margin-right: 76px; }
.weather { gap: 9px; font-size: 14px; line-height: 20px; }
.cloud { position: relative; }
.cloud i { position: absolute; top: -4px; right: 0; width: 12px; height: 12px; border-radius: 50%; background: #c42b1c; font: 9px/12px "Open Sans", sans-serif; text-align: center; }
.status { display: flex; gap: 8px; margin-left: 22px; }
.status svg { width: 16px; height: 16px; fill: none; stroke: #fff; stroke-width: 1.300px; }
.clock { width: 74px; text-align: center; line-height: 18px; font-size: 11px; }
.tray .note { width: 18px; height: 18px; margin: 0 18px 0 8px; }
.peek { width: 5px; height: 40px; border-left: 1px solid #666c75; }
```
FILE: scene.js
```js
// Projects the 325 x 325 mm print bed and draws its 10 mm grid.
const project = (u, v) => {
  const w = 1 + 0.19565 * (u + v);
  const x = 750 + 634.9 * (u - v) / w;
  const y = (1010 - 338.05 * (u + v)) / w;
  return x.toFixed(1) + ' ' + y.toFixed(1);
};
let d = '';
for (let mm = 10; mm < 325; mm += 10) {
  const t = mm / 325;
  d += `M${project(t, 0)}L${project(t, 1)}M${project(0, t)}L${project(1, t)}`;
}
document.getElementById('grid').setAttribute('d', d);
```
